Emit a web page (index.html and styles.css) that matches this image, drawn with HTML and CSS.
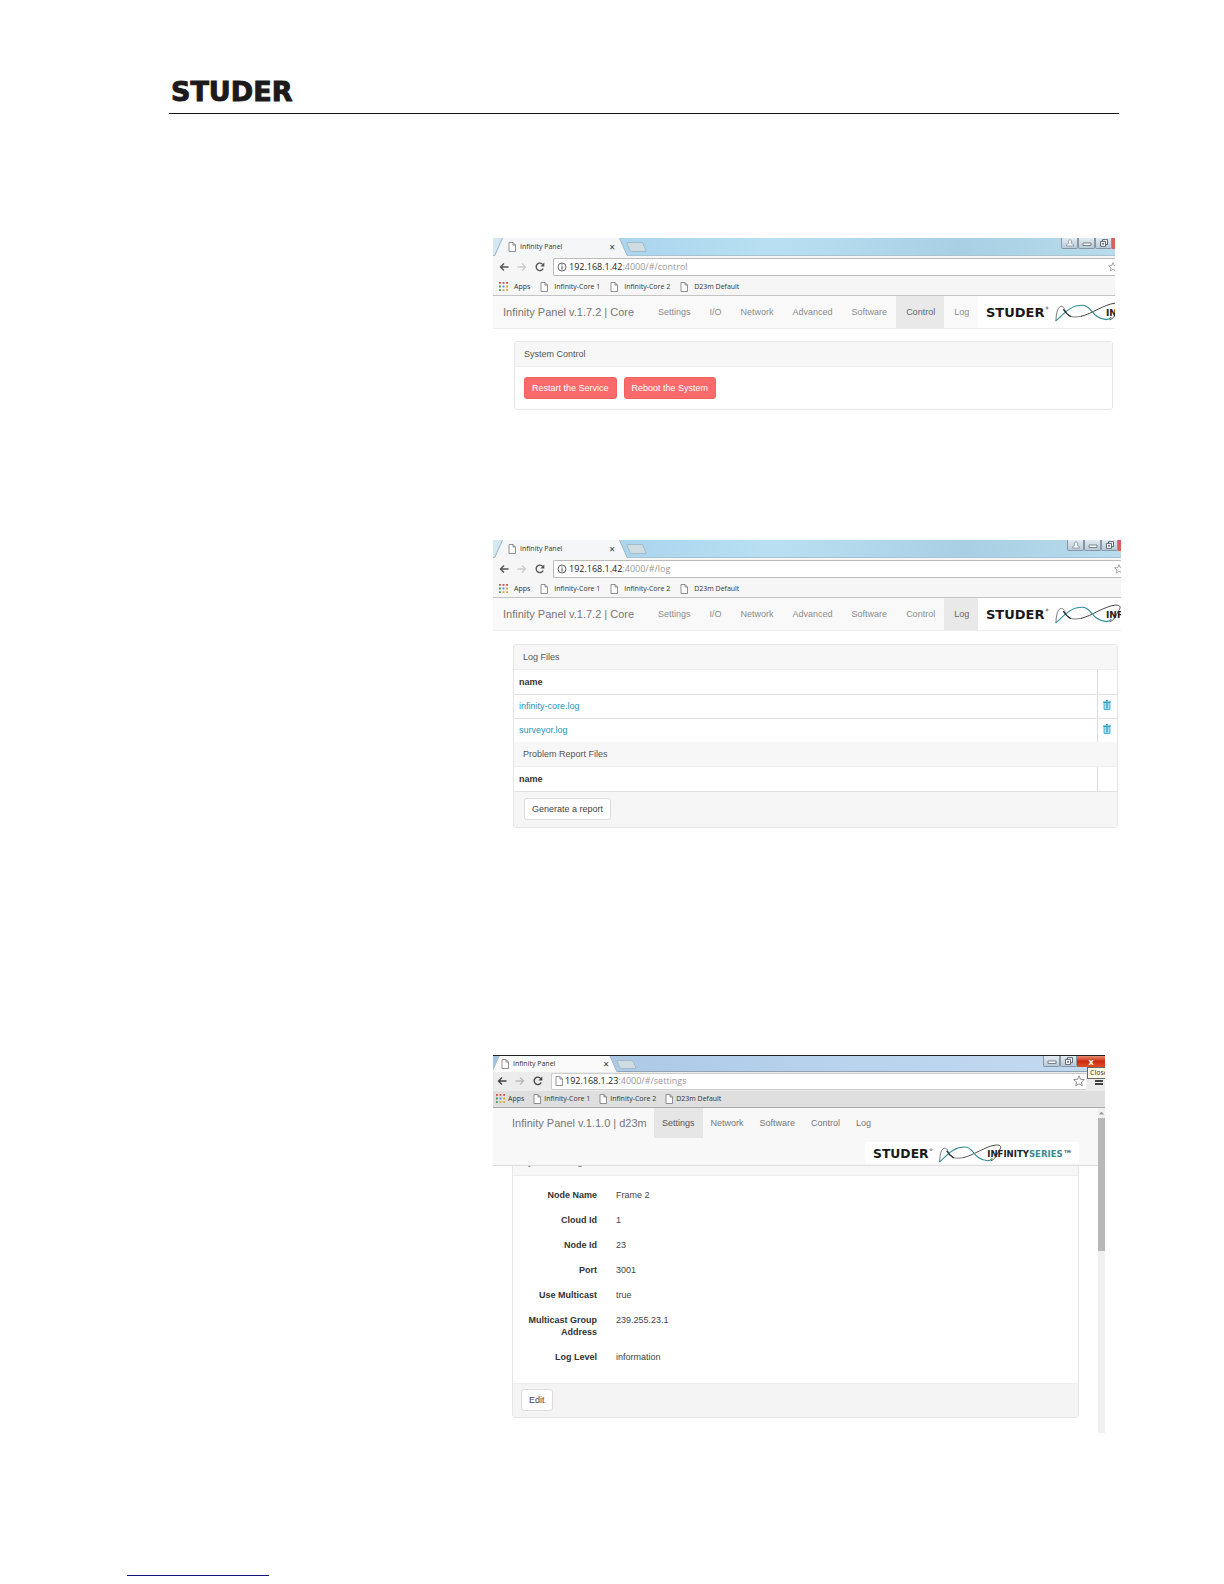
FILE: index.html
```html
<!DOCTYPE html>
<html lang="en">
<head>
  <meta charset="UTF-8">
  <meta name="viewport" content="width=device-width, initial-scale=1.0">
  <title>Infinity Panel</title>
  <link rel="stylesheet" href="styles.css">
</head>
<body>
  <!-- Shared icons -->
  <svg class="sprite" aria-hidden="true">
    <symbol id="page" viewBox="0 0 8 10">
      <path d="M1 .5h4l2.500 2.500v6.500h-6.500zM5 .5v2.500h2.500" fill="#fff" stroke="#777" stroke-width=".8"/>
    </symbol>
    <symbol id="back" viewBox="0 0 10 10">
      <path d="M9.500 5H1.500M5 1.500L1.500 5 5 8.500" fill="none" stroke="currentColor" stroke-width="1.400"/>
    </symbol>
    <symbol id="forward" viewBox="0 0 10 10">
      <path d="M.5 5h8M5 1.500L8.500 5 5 8.500" fill="none" stroke="currentColor" stroke-width="1.400"/>
    </symbol>
    <symbol id="reload" viewBox="0 0 10 10">
      <path d="M8.200 6.500A3.700 3.700 0 1 1 7.800 2.600" fill="none" stroke="currentColor" stroke-width="1.400"/>
      <path d="M9.300.6v3.900H5.400z" fill="currentColor"/>
    </symbol>
    <symbol id="info" viewBox="0 0 10 10">
      <circle cx="5" cy="5" r="4" fill="none" stroke="#555" stroke-width=".9"/>
      <path d="M5 4.300v3.200M5 2.400v1.100" stroke="#555" stroke-width="1.100"/>
    </symbol>
    <symbol id="star" viewBox="0 0 12 12">
      <path d="M6 .8l1.500 3.500 3.800.3-2.900 2.500.9 3.700L6 8.800l-3.300 2 .9-3.700L.7 4.600l3.800-.3z" fill="#fff" stroke="#777" stroke-width=".8"/>
    </symbol>
    <symbol id="apps" viewBox="0 0 10 10">
      <path d="M0 0h2v2H0zM4 0h2v2H4zM8 0h2v2H8z" fill="#d9483b"/>
      <path d="M0 4h2v2H0z" fill="#3f9a52"/>
      <path d="M4 4h2v2H4z" fill="#4a7fd6"/>
      <path d="M8 4h2v2H8z" fill="#e0a429"/>
      <path d="M0 8h2v2H0z" fill="#3f9a52"/>
      <path d="M4 8h2v2H4zM8 8h2v2H8z" fill="#e0a429"/>
    </symbol>
    <symbol id="trash" viewBox="0 0 8 10">
      <path d="M1 2.500h6v7H1z" fill="#a5dcf0" stroke="#3aa5cc" stroke-width=".8"/>
      <path d="M0 2h8M3 .7h2M4 3v5.500" stroke="#1b8fb8" fill="none"/>
    </symbol>
    <symbol id="user" viewBox="0 0 10 8">
      <path d="M1.500 7c0-2 1.500-2.500 2.500-2.800C2.500 2.500 3.500.8 5 .8s2.500 1.700 1 3.400c1 .3 2.500.8 2.500 2.800z" fill="#fff" stroke="#7d8a99" stroke-width=".8"/>
    </symbol>
    <symbol id="minimize" viewBox="0 0 10 8">
      <path d="M1 4h8v2.500H1z" fill="#fff" stroke="#6b7683" stroke-width=".9"/>
    </symbol>
    <symbol id="restore" viewBox="0 0 10 8">
      <path d="M3.500.6h5v5h-5z" fill="#fff" stroke="#4f5965" stroke-width=".9"/>
      <path d="M1.500 2.400h5v5h-5zM3.500 4.300h1v1h-1z" fill="#fff" stroke="#4f5965" stroke-width=".9"/>
    </symbol>
    <symbol id="series" viewBox="0 0 209 22">
      <text class="series-studer" x="0" y="17">STUDER</text>
      <circle cx="61" cy="8" r="1" fill="none" stroke="#333" stroke-width=".6"/>
      <g transform="translate(70 2) scale(1.1)" fill="none" stroke-linecap="round">
        <path d="M0 17C0 9 2 4 5 4c3 0 3 5 6 8 3 2 7 2 12 1" stroke="#666" stroke-width=".8"/>
        <path d="M23 13C32 11 44 2 54 1c5 0 5 2 3 5-3 5-4 9-8 10" stroke="#444" stroke-width=".9"/>
        <path d="M0 17C8 10 13 3 24 3c9 0 8 12 22 13 2 0 3-1 4-2" stroke="#2d8c96"/>
        <path d="M7 7c1 2 3 4 6 6" stroke="#1c2a30" stroke-width="1.200"/>
      </g>
      <text class="series-name" x="120" y="16">INFINITY<tspan class="series-teal">SERIES</tspan></text>
      <text class="series-tm" x="201" y="12">TM</text>
    </symbol>
  </svg>

  <header class="page-header">
    <div class="brand-logo">STUDER</div>
  </header>

  <main>
    <!-- Control page -->
    <section class="window window-control">
      <div class="tabstrip">
        <div class="tab">
          <svg class="icon-page"><use href="#page"/></svg>
          <span class="tab-title">Infinity Panel</span>
          <button class="tab-close">×</button>
        </div>
        <button class="new-tab"></button>
        <div class="win-buttons">
          <button><svg><use href="#user"/></svg></button>
          <button><svg><use href="#minimize"/></svg></button>
          <button><svg><use href="#restore"/></svg></button>
          <button class="win-close"></button>
        </div>
      </div>
      <div class="toolbar">
        <button class="tool"><svg><use href="#back"/></svg></button>
        <button class="tool disabled"><svg><use href="#forward"/></svg></button>
        <button class="tool"><svg><use href="#reload"/></svg></button>
        <label class="omnibox">
          <svg class="icon-info"><use href="#info"/></svg>
          <span class="host">192.168.1.42</span>
          <input class="url" type="text" value=":4000/#/control">
          <svg class="icon-star"><use href="#star"/></svg>
        </label>
      </div>
      <div class="bookmarks">
        <a href="#"><svg class="icon-apps"><use href="#apps"/></svg>Apps</a>
        <a href="#"><svg class="icon-page"><use href="#page"/></svg>Infinity-Core 1</a>
        <a href="#"><svg class="icon-page"><use href="#page"/></svg>Infinity-Core 2</a>
        <a href="#"><svg class="icon-page"><use href="#page"/></svg>D23m Default</a>
      </div>
      <nav class="navbar">
        <a class="navbar-brand" href="#">Infinity Panel v.1.7.2 | Core</a>
        <a class="nav-link" href="#">Settings</a>
        <a class="nav-link" href="#">I/O</a>
        <a class="nav-link" href="#">Network</a>
        <a class="nav-link" href="#">Advanced</a>
        <a class="nav-link" href="#">Software</a>
        <a class="nav-link active" href="#">Control</a>
        <a class="nav-link" href="#">Log</a>
        <div class="nav-logo"><svg><use href="#series"/></svg></div>
      </nav>
      <div class="panel">
        <div class="panel-heading">System Control</div>
        <div class="panel-body">
          <button class="btn btn-danger">Restart the Service</button>
          <button class="btn btn-danger">Reboot the System</button>
        </div>
      </div>
    </section>

    <!-- Log page -->
    <section class="window window-log">
      <div class="tabstrip">
        <div class="tab">
          <svg class="icon-page"><use href="#page"/></svg>
          <span class="tab-title">Infinity Panel</span>
          <button class="tab-close">×</button>
        </div>
        <button class="new-tab"></button>
        <div class="win-buttons">
          <button><svg><use href="#user"/></svg></button>
          <button><svg><use href="#minimize"/></svg></button>
          <button><svg><use href="#restore"/></svg></button>
          <button class="win-close"></button>
        </div>
      </div>
      <div class="toolbar">
        <button class="tool"><svg><use href="#back"/></svg></button>
        <button class="tool disabled"><svg><use href="#forward"/></svg></button>
        <button class="tool"><svg><use href="#reload"/></svg></button>
        <label class="omnibox">
          <svg class="icon-info"><use href="#info"/></svg>
          <span class="host">192.168.1.42</span>
          <input class="url" type="text" value=":4000/#/log">
          <svg class="icon-star"><use href="#star"/></svg>
        </label>
      </div>
      <div class="bookmarks">
        <a href="#"><svg class="icon-apps"><use href="#apps"/></svg>Apps</a>
        <a href="#"><svg class="icon-page"><use href="#page"/></svg>Infinity-Core 1</a>
        <a href="#"><svg class="icon-page"><use href="#page"/></svg>Infinity-Core 2</a>
        <a href="#"><svg class="icon-page"><use href="#page"/></svg>D23m Default</a>
      </div>
      <nav class="navbar">
        <a class="navbar-brand" href="#">Infinity Panel v.1.7.2 | Core</a>
        <a class="nav-link" href="#">Settings</a>
        <a class="nav-link" href="#">I/O</a>
        <a class="nav-link" href="#">Network</a>
        <a class="nav-link" href="#">Advanced</a>
        <a class="nav-link" href="#">Software</a>
        <a class="nav-link" href="#">Control</a>
        <a class="nav-link active" href="#">Log</a>
        <div class="nav-logo"><svg><use href="#series"/></svg></div>
      </nav>
      <div class="panel">
        <div class="panel-heading">Log Files</div>
        <table>
          <tr><th>name</th><th class="action"></th></tr>
          <tr>
            <td><a href="#">infinity-core.log</a></td>
            <td class="action"><button class="delete"><svg><use href="#trash"/></svg></button></td>
          </tr>
          <tr>
            <td><a href="#">surveyor.log</a></td>
            <td class="action"><button class="delete"><svg><use href="#trash"/></svg></button></td>
          </tr>
        </table>
        <div class="panel-heading">Problem Report Files</div>
        <table>
          <tr><th>name</th><th class="action"></th></tr>
        </table>
        <div class="panel-footer">
          <button class="btn">Generate a report</button>
        </div>
      </div>
    </section>

    <!-- Settings page -->
    <section class="window window-settings">
      <div class="tabstrip">
        <div class="tab">
          <svg class="icon-page"><use href="#page"/></svg>
          <span class="tab-title">Infinity Panel</span>
          <button class="tab-close">×</button>
        </div>
        <button class="new-tab"></button>
        <div class="win-buttons">
          <button><svg><use href="#minimize"/></svg></button>
          <button><svg><use href="#restore"/></svg></button>
          <button class="win-close">x</button>
        </div>
        <div class="tooltip">Close</div>
      </div>
      <div class="toolbar">
        <button class="tool"><svg><use href="#back"/></svg></button>
        <button class="tool disabled"><svg><use href="#forward"/></svg></button>
        <button class="tool"><svg><use href="#reload"/></svg></button>
        <label class="omnibox">
          <svg class="icon-page"><use href="#page"/></svg>
          <span class="host">192.168.1.23</span>
          <input class="url" type="text" value=":4000/#/settings">
          <svg class="icon-star"><use href="#star"/></svg>
        </label>
        <button class="menu"></button>
      </div>
      <div class="bookmarks">
        <a href="#"><svg class="icon-apps"><use href="#apps"/></svg>Apps</a>
        <a href="#"><svg class="icon-page"><use href="#page"/></svg>Infinity-Core 1</a>
        <a href="#"><svg class="icon-page"><use href="#page"/></svg>Infinity-Core 2</a>
        <a href="#"><svg class="icon-page"><use href="#page"/></svg>D23m Default</a>
      </div>
      <div class="viewport">
        <div class="content">
          <nav class="navbar">
            <a class="navbar-brand" href="#">Infinity Panel v.1.1.0 | d23m</a>
            <a class="nav-link active" href="#">Settings</a>
            <a class="nav-link" href="#">Network</a>
            <a class="nav-link" href="#">Software</a>
            <a class="nav-link" href="#">Control</a>
            <a class="nav-link" href="#">Log</a>
            <div class="nav-logo"><svg><use href="#series"/></svg></div>
          </nav>
          <div class="panel">
            <div class="panel-heading">System Settings</div>
            <dl>
              <dt>Node Name</dt><dd>Frame 2</dd>
              <dt>Cloud Id</dt><dd>1</dd>
              <dt>Node Id</dt><dd>23</dd>
              <dt>Port</dt><dd>3001</dd>
              <dt>Use Multicast</dt><dd>true</dd>
              <dt>Multicast Group Address</dt><dd>239.255.23.1</dd>
              <dt>Log Level</dt><dd>information</dd>
            </dl>
            <div class="panel-footer">
              <button class="btn">Edit</button>
            </div>
          </div>
        </div>
        <div class="scrollbar">
          <div class="scroll-up"></div>
          <div class="scroll-thumb"></div>
        </div>
      </div>
    </section>
  </main>

  <footer class="page-footer">
    <hr>
  </footer>
</body>
</html>
```
FILE: styles.css
```css
* {
  box-sizing: border-box;
  margin: 0;
  padding: 0;
}

body {
  background-color: #fff;
  color: #444;
  font-family: "Liberation Sans", Arial, sans-serif;
  font-size: 9px;
  line-height: 12px;
}

a {
  color: inherit;
  text-decoration: none;
}

button {
  border: none;
  background: none;
  font: inherit;
  color: inherit;
  cursor: pointer;
}

svg {
  display: block;
  flex-shrink: 0;
}

.sprite {
  position: absolute;
  width: 0;
  height: 0;
}

.page-header {
  margin: 0 105px 0 169px;
  padding: 80px 2px 9px;
  border-bottom: 1px solid #111;
}

.brand-logo {
  color: #1d1a1b;
  font-family: "DejaVu Sans", sans-serif;
  font-size: 27px;
  font-weight: bold;
  line-height: 24px;
  -webkit-text-stroke: 1px #1d1a1b;
}

main {
  padding: 124px 103px 0 493px;
}

/* Browser window */
.window {
  overflow: hidden;
}

.window-control {
  margin-right: 6px;
  margin-bottom: 130px;
}

.window-log {
  margin-bottom: 227px;
}

.window-settings {
  margin-right: 16px;
  border-top: 1px solid #222;
}

.tabstrip,
.toolbar,
.bookmarks {
  font-family: "Open Sans", "Noto Sans", sans-serif;
  color: #333;
}

.tabstrip {
  position: relative;
  display: flex;
  align-items: flex-start;
  height: 18px;
  padding-left: 5px;
  border-bottom: 1px solid #a9c3d3;
  background: linear-gradient(90deg, #d5e8f3, #a9d5ee 20%, #b9e0f2 45%, #a8cfe4 75%, #b8dcec);
}

.tab {
  position: relative;
  z-index: 1;
  display: flex;
  align-items: center;
  width: 126px;
  height: 18px;
  padding: 0 6px 0 10px;
  font-size: 7px;
}

/* Slanted edges of the tab */
.tab::before,
.tab::after {
  content: "";
  position: absolute;
  z-index: -1;
  top: 0;
  width: 60%;
  height: 18px;
  background-color: #f5f6f7;
}

.tab::before {
  left: 0;
  border-left: 1px solid #8fb0c4;
  transform: skewX(-24deg);
}

.tab::after {
  right: 0;
  border-right: 1px solid #8fb0c4;
  transform: skewX(24deg);
}

.tab-title {
  flex: 1;
  margin-left: 4px;
}

.tab-close {
  margin-right: 3px;
  font-size: 10px;
}

.new-tab {
  width: 17px;
  height: 10px;
  margin: 4px 0 0 4px;
  border: 1px solid #a3bac8;
  border-radius: 2px;
  background-color: #cfdde3;
  transform: skewX(24deg);
}

.win-buttons {
  display: flex;
  margin-left: auto;
}

.win-buttons button {
  width: 17px;
  height: 11px;
  padding: 1px 3px;
  border: 1px solid #8796a5;
  border-top: none;
  border-radius: 0 0 2px 2px;
  background: linear-gradient(#e3ebf2, #b9cad8);
}

.win-buttons svg {
  width: 10px;
  height: 8px;
}

.win-buttons .win-close {
  width: 3px;
  padding: 0;
  border: none;
  border-radius: 0;
  background: #d9605a;
}

.toolbar {
  display: flex;
  align-items: center;
  height: 22px;
  padding-left: 6px;
  background-color: #f6f6f6;
}

.tool {
  margin-right: 8px;
  color: #555;
}

.tool svg {
  width: 10px;
  height: 10px;
}

.tool.disabled {
  color: #ccc;
}

.omnibox {
  display: flex;
  flex: 1;
  align-items: center;
  height: 18px;
  padding-left: 3px;
  border: 1px solid #bbb;
  border-right: none;
  border-radius: 2px 0 0 2px;
  background-color: #fff;
  font-size: 9px;
}

.omnibox .host {
  margin-left: 2px;
  color: #222;
}

.url {
  flex: 1;
  min-width: 0;
  border: none;
  outline: none;
  background: none;
  color: #999;
  font: inherit;
}

.icon-info {
  width: 10px;
  height: 10px;
}

.icon-star {
  width: 10px;
  height: 10px;
  margin-right: -3px;
}

.icon-page {
  width: 8px;
  height: 10px;
}

.icon-apps {
  width: 9px;
  height: 9px;
}

.bookmarks {
  display: flex;
  align-items: center;
  gap: 10px;
  height: 18px;
  padding-left: 6px;
  border-bottom: 1px solid #c4c4c4;
  background-color: #f6f6f6;
  font-size: 7px;
}

.bookmarks a {
  display: flex;
  align-items: center;
  gap: 6px;
}

/* Page header with the menu */
.navbar {
  display: flex;
  height: 33px;
  padding-left: 10px;
  border-bottom: 1px solid #eee;
  background-color: #f9f9f9;
  color: #8c8c8c;
  line-height: 32px;
  white-space: nowrap;
}

.navbar-brand {
  flex-shrink: 0;
  width: 145px;
  color: #777;
  font-size: 11px;
}

.nav-link {
  padding: 0 9px 0 10px;
}

.nav-link.active {
  background-color: #e9e9e9;
  color: #666;
}

.nav-logo {
  padding: 4px 8px;
  background-color: #fff;
}

.nav-logo svg {
  width: 209px;
  height: 22px;
}

.series-studer {
  fill: #1a1a1a;
  font: bold 13px "DejaVu Sans", sans-serif;
}

.series-name {
  fill: #222;
  font: bold 9px "DejaVu Sans", sans-serif;
}

.series-teal {
  fill: #3c8c94;
}

.series-tm {
  fill: #444;
  font: bold 4px "DejaVu Sans", sans-serif;
}

/* Panels */
.panel {
  margin: 12px 2px 0 21px;
  border: 1px solid #e6e6e6;
  border-radius: 3px;
  background-color: #fff;
}

.panel-heading {
  padding: 6px 9px;
  border-bottom: 1px solid #eee;
  background-color: #f7f7f7;
  color: #555;
}

.panel-body {
  display: flex;
  gap: 7px;
  padding: 10px 9px;
}

.btn {
  height: 22px;
  padding: 0 7px;
  border: 1px solid #ddd;
  border-radius: 3px;
  background-color: #fff;
  color: #444;
}

.btn-danger {
  border-color: #f2605f;
  background-color: #fb6a6a;
  color: #fff;
}

.window-log .panel {
  margin: 13px 3px 0 20px;
}

table {
  width: 100%;
  border-collapse: collapse;
}

th,
td {
  height: 24px;
  padding: 0 5px;
  border-bottom: 1px solid #e2e2e2;
  text-align: left;
}

tr:last-child td {
  border-bottom: none;
}

th {
  color: #333;
}

td a {
  color: #2496bd;
}

.action {
  width: 20px;
  border-left: 1px solid #ddd;
}

.delete svg {
  width: 8px;
  height: 10px;
}

.panel-footer {
  padding: 6px 10px 7px;
  background-color: #f6f6f6;
}

.window-log .btn {
  display: block;
}

/* Settings window uses the older browser skin */
.window-settings .tabstrip {
  height: 16px;
  padding-left: 2px;
  border-bottom-color: #8fa3b8;
  background: linear-gradient(90deg, #a6c3e2, #bad4ee 60%, #c2d9f0);
}

.window-settings .tab {
  width: 119px;
  height: 16px;
  padding: 0 2px 0 6px;
}

.window-settings .tab::before,
.window-settings .tab::after {
  height: 16px;
  background-color: #fafafa;
}

.window-settings .new-tab {
  height: 9px;
}

.window-settings .win-buttons .win-close {
  width: 28px;
  background: linear-gradient(#e88a70, #cc2a0c 50%, #e0502c);
  color: #fff;
  font-size: 9px;
  font-weight: bold;
  line-height: 9px;
}

.tooltip {
  position: absolute;
  z-index: 2;
  top: 11px;
  right: 0;
  width: 18px;
  overflow: hidden;
  padding-left: 2px;
  border: 1px solid #666;
  border-right: none;
  background-color: #fcfce8;
  font-size: 7px;
  line-height: 10px;
}

.window-settings .toolbar {
  height: 19px;
  padding-left: 4px;
  background-color: #ececec;
}

.window-settings .tool {
  color: #444;
}

.window-settings .tool.disabled {
  color: #bbb;
}

.window-settings .omnibox {
  height: 17px;
  border-color: #ccc;
}

.window-settings .icon-star {
  width: 12px;
  height: 12px;
  margin-right: 1px;
}

.menu {
  width: 8px;
  height: 8px;
  margin: 0 2px 0 9px;
  border-top: 2px solid #444;
  border-bottom: 2px solid #444;
  background: linear-gradient(transparent 1px, #444 1px, #444 3px, transparent 3px);
}

.window-settings .bookmarks {
  gap: 9px;
  height: 17px;
  padding-left: 3px;
  border-bottom-color: #aaa;
  background-color: #dfdfdf;
}

.window-settings .bookmarks a {
  gap: 3px;
}

.viewport {
  display: flex;
}

.content {
  flex: 1;
  padding-bottom: 15px;
}

.window-settings .navbar {
  position: relative;
  z-index: 1;
  flex-wrap: wrap;
  height: auto;
  padding-left: 19px;
  border-bottom-color: #ddd;
  background-color: #f8f8f8;
  color: #777;
  line-height: 30px;
}

.window-settings .navbar-brand {
  width: 142px;
}

.window-settings .nav-link {
  padding: 0 8px;
}

.window-settings .nav-link.active {
  background-color: #e6e6e6;
  color: #555;
}

.window-settings .nav-logo {
  margin: 4px 19px 2px auto;
  padding: 0 7px 0 8px;
}

.window-settings .nav-logo svg {
  width: 199px;
  height: 21px;
}

/* Heading is scrolled under the navbar */
.window-settings .panel {
  margin: -16px 19px 0 19px;
}

.window-settings .panel-heading {
  padding: 5px 9px 7px;
}

dl {
  display: grid;
  grid-template-columns: 76px 1fr;
  gap: 13px 19px;
  padding: 13px 8px 20px;
}

dt {
  color: #333;
  font-weight: bold;
  text-align: right;
}

.window-settings .panel-footer {
  padding: 5px 8px 6px;
  border-top: 1px solid #eee;
  background-color: #f4f4f4;
}

.scrollbar {
  width: 7px;
  background-color: #f0f0f0;
}

.scroll-up {
  width: 5px;
  height: 3px;
  margin: 4px 1px 3px;
  background-color: #999;
  clip-path: polygon(50% 0, 100% 100%, 0 100%);
}

.scroll-thumb {
  height: 133px;
  background-color: #b8b8b8;
}

.page-footer {
  padding: 142px 0 8px 127px;
}

.page-footer hr {
  width: 142px;
  border: none;
  border-top: 1px solid #12127a;
}
```
